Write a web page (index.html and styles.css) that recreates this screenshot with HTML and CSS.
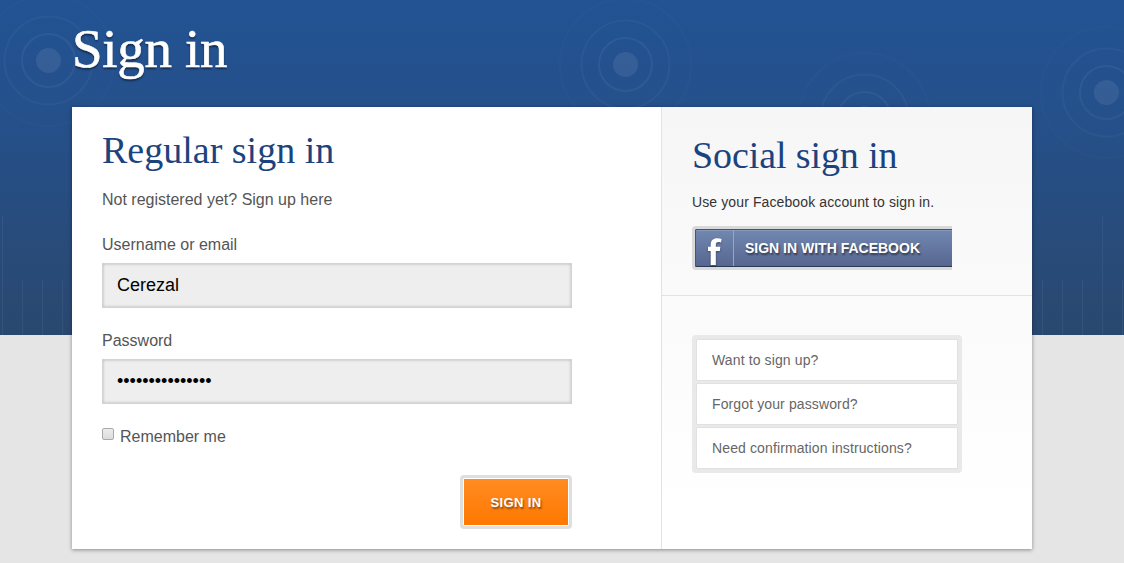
FILE: index.html
```html
<!DOCTYPE html>
<html lang="en">
  <head>
    <meta charset="utf-8">
    <title>Sign in</title>
    <link rel="stylesheet" href="styles.css">
  </head>
  <body>
    <svg class="backdrop" width="1124" height="335" viewBox="0 0 1124 335">
      <defs>
        <g id="ripple">
          <circle r="12.5" class="dot" />
          <circle r="26.5" class="ring ring-inner" />
          <circle r="44" class="ring ring-middle" />
          <circle r="65.5" class="ring ring-outer" />
        </g>
      </defs>
      <use href="#ripple" x="48.5" y="60.5" />
      <use href="#ripple" x="625.5" y="64.5" />
      <use href="#ripple" x="864.5" y="118.5" />
      <use href="#ripple" x="1106.5" y="92.5" />
      <path class="stripes" d="M2.5 215V335M22.5 280V335M42.5 280V335M62.5 280V335M1042.5 280V335M1062.5 280V335M1082.5 280V335M1102.5 215V335M1122.5 280V335" />
    </svg>

    <div class="wrapper">
      <h1>Sign in</h1>

      <div class="card">
        <form class="main">
          <h2>Regular sign in</h2>
          <p class="intro">Not registered yet? <a href="#">Sign up here</a></p>

          <label for="login">Username or email</label>
          <input class="field" id="login" type="text" value="Cerezal">

          <label for="password">Password</label>
          <input class="field" id="password" type="password" value="correcthorse123">

          <div class="remember">
            <input class="check" id="remember" type="checkbox">
            <label for="remember">Remember me</label>
          </div>

          <div class="actions">
            <button class="submit" type="button">SIGN IN</button>
          </div>
        </form>

        <div class="sidebar">
          <div class="social">
            <h2>Social sign in</h2>
            <p>Use your Facebook account to sign in.</p>
            <a class="facebook" href="#">
              <span class="facebook-logo">
                <svg width="14" height="27" viewBox="0 0 14 27">
                  <path d="M2.700 27V13H0V8.800H2.700V6.800C2.700 2.500 5 .3 9.300 .3C11 .3 12.500 .5 13.600 .9L13 4.500C12 4.200 11.300 4.100 10.400 4.100C8.500 4.100 7.800 5 7.800 6.900V8.800H12.300L11.800 13H7.800V27Z" fill="#fff" />
                </svg>
              </span>
              <span class="facebook-text">SIGN IN WITH FACEBOOK</span>
            </a>
          </div>

          <ul class="links">
            <li><a href="#">Want to sign up?</a></li>
            <li><a href="#">Forgot your password?</a></li>
            <li><a href="#">Need confirmation instructions?</a></li>
          </ul>
        </div>
      </div>
    </div>
  </body>
</html>
```
FILE: styles.css
```css
* {
  box-sizing: border-box;
}

body {
  margin: 0;
  height: 563px;
  overflow: hidden;
  background: #e5e5e5;
  color: #555;
  font-family: 'Liberation Sans', Arial, sans-serif;
  font-size: 16px;
}

h1, h2, p, ul {
  margin: 0;
  padding: 0;
  font-weight: normal;
}

a {
  color: inherit;
  text-decoration: none;
}

/* decoration behind the page */
.backdrop {
  position: absolute;
  top: 0;
  left: 0;
  background: linear-gradient(#235394, #25508a 35%, #2a486f);
}

.dot {
  fill: rgba(255, 255, 255, .08);
}

.ring {
  fill: none;
  stroke: #fff;
  stroke-width: 2;
}

.ring-inner {
  stroke-opacity: .05;
}

.ring-middle {
  stroke-opacity: .035;
}

.ring-outer {
  stroke-opacity: .015;
}

.stripes {
  stroke: rgba(255, 255, 255, .06);
}

.wrapper {
  position: relative;
  width: 960px;
  margin: 0 auto 0 72px;
}

h1, h2 {
  font-family: 'Palatino Linotype', Palatino, 'Liberation Serif', serif;
}

h1 {
  height: 107px;
  padding-top: 18px;
  color: #fff;
  font-size: 55px;
  line-height: 62px;
  letter-spacing: -.3px;
  text-shadow: 0 2px 2px rgba(0, 0, 0, .5);
  -webkit-text-stroke: .6px #fff;
}

h2 {
  color: #1c437e;
  font-size: 38px;
  line-height: 44px;
}

.card {
  display: flex;
  height: 442px;
  background: #fff;
  box-shadow: 0 1px 4px rgba(0, 0, 0, .4);
}

.main {
  width: 589px;
  padding: 21px 89px 0 30px;
}

.intro {
  margin-top: 18px;
  margin-bottom: 25px;
  line-height: 20px;
}

.main label {
  display: block;
  line-height: 20px;
}

.field {
  display: block;
  width: 470px;
  height: 45px;
  margin: 8px 0 23px;
  padding: 0 14px;
  border: 1px solid #d3d3d3;
  background: #eee;
  box-shadow: inset 0 0 3px rgba(0, 0, 0, .25);
  color: #000;
  font-family: 'Liberation Sans', Arial, sans-serif;
  font-size: 18px;
}

.remember {
  display: flex;
}

.check {
  appearance: none;
  width: 12px;
  height: 12px;
  margin: 1px 6px 0 0;
  border: 1px solid #aaa;
  border-radius: 2px;
  background: linear-gradient(#ececec, #dcdcdc);
}

.actions {
  display: flex;
  justify-content: flex-end;
  margin-top: 28px;
}

.submit {
  width: 112px;
  height: 54px;
  padding: 0;
  border: 3px solid #dfdfdf;
  border-radius: 4px;
  background: linear-gradient(#ff8c22, #ff7800);
  box-shadow: inset 0 0 0 1px #fff;
  color: #fff;
  font: bold 13px 'Liberation Sans', Arial, sans-serif;
  letter-spacing: .4px;
  text-shadow: 1px 2px 2px rgba(0, 0, 0, .45);
}

.sidebar {
  width: 371px;
  border-left: 1px solid #e3e3e3;
  background: linear-gradient(#f6f6f6, #fff 90%);
}

.social {
  height: 189px;
  padding: 26px 30px 0;
  border-bottom: 1px solid #e2e2e2;
}

.social h2 {
  letter-spacing: -.1px;
}

.social p {
  margin: 15px 0 14px;
  color: #333;
  font-size: 14px;
  line-height: 20px;
  letter-spacing: .11px;
}

.facebook {
  display: flex;
  width: 260px;
  height: 44px;
  border: 3px solid #d9d9d9;
  border-right: 0;
  border-radius: 4px 0 0 4px;
  background: linear-gradient(#7289b1, #566590);
  box-shadow: inset 1px 1px #3f5779, inset 0 -1px #293956, inset 0 2px #8299bb;
  color: #fff;
}

.facebook-logo {
  width: 39px;
  padding: 8px 0 0 13px;
  border-right: 1px solid #96a6c5;
  margin: 1px 0;
}

.facebook-logo svg {
  display: block;
  filter: drop-shadow(0 1px 1px rgba(0, 0, 0, .35));
}

.facebook-text {
  padding-left: 11px;
  font-size: 14px;
  font-weight: bold;
  line-height: 38px;
  text-shadow: 1px 2px 2px rgba(0, 0, 0, .5);
  white-space: nowrap;
}

.links {
  width: 270px;
  margin: 39px 0 0 30px;
  padding: 4px;
  border-radius: 4px;
  background: #e9e9e9;
  list-style: none;
}

.links li {
  height: 42px;
  margin-bottom: 2px;
  padding-left: 15px;
  border: 1px solid #e1e1e1;
  border-radius: 2px;
  background: #fff;
  color: #666;
  font-size: 14px;
  line-height: 40px;
  letter-spacing: .12px;
}

.links li:last-child {
  margin-bottom: 0;
}
```
